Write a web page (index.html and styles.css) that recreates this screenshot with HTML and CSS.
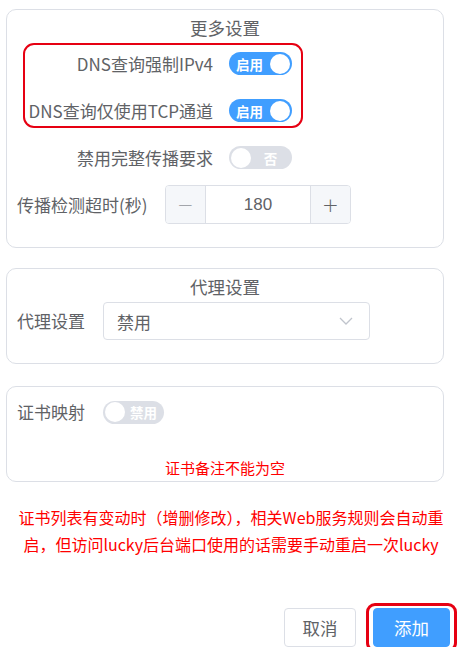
FILE: index.html
```html
<!DOCTYPE html>
<html lang="zh-CN">
<head>
<meta charset="utf-8">
<title>更多设置</title>
<link rel="stylesheet" href="styles.css">
</head>
<body>
<div class="page">
  <section class="card card-more">
    <div class="card-title">更多设置</div>
    <div class="row">
      <span class="lbl lbl-right">DNS查询强制IPv4</span>
      <span class="switch on"><span class="sw-text">启用</span><span class="knob"></span></span>
    </div>
    <div class="row">
      <span class="lbl lbl-right">DNS查询仅使用TCP通道</span>
      <span class="switch on"><span class="sw-text">启用</span><span class="knob"></span></span>
    </div>
    <div class="row">
      <span class="lbl lbl-right">禁用完整传播要求</span>
      <span class="switch off"><span class="knob"></span><span class="sw-text">否</span></span>
    </div>
    <div class="row row-indent">
      <span class="lbl lbl-num">传播检测超时(秒)</span>
      <div class="num">
        <span class="num-btn num-dec">−</span>
        <span class="num-val">180</span>
        <span class="num-btn num-inc">+</span>
      </div>
    </div>
    <div class="annot annot-dns"></div>
  </section>

  <section class="card card-proxy">
    <div class="card-title">代理设置</div>
    <div class="row row-short row-indent">
      <span class="lbl lbl-short">代理设置</span>
      <div class="select">
        <span class="select-val">禁用</span>
        <svg class="chev" width="14" height="8" viewBox="0 0 14 8"><polyline points="1,1 7,7 13,1" fill="none" stroke="#c0c4cc" stroke-width="1.3"/></svg>
      </div>
    </div>
  </section>

  <section class="card card-cert">
    <div class="row row-cert row-indent">
      <span class="lbl lbl-short">证书映射</span>
      <span class="switch off switch-cert"><span class="knob"></span><span class="sw-text">禁用</span></span>
    </div>
    <div class="err">证书备注不能为空</div>
  </section>

  <p class="warn">证书列表有变动时（增删修改），相关Web服务规则会自动重<br>启，但访问lucky后台端口使用的话需要手动重启一次lucky</p>

  <div class="footer">
    <button class="btn btn-cancel">取消</button>
    <span class="btn-wrap"><button class="btn btn-primary">添加</button></span>
  </div>
</div>
</body>
</html>
```

FILE: styles.css
```css
* { box-sizing: border-box; }
html, body {
  margin: 0;
  padding: 0;
  background: #ffffff;
}
body {
  font-family: "Noto Sans CJK SC", "Noto Sans", sans-serif;
  color: #606266;
}
.page {
  width: 475px;
  padding: 9px 0 0 6px;
}
.card {
  position: relative;
  width: 438px;
  border: 1px solid #dcdfe6;
  border-radius: 10px;
  background: #fff;
}
.card-more { padding-bottom: 19px; }
.card-proxy { margin-top: 20px; padding-bottom: 20px; }
.card-cert { margin-top: 22px; padding: 5px 0 3px; }

.card-title {
  height: 30px;
  padding-top: 6px;
  line-height: 24px;
  font-size: 17.5px;
  text-align: center;
  color: #606266;
}
.row {
  display: flex;
  align-items: center;
  height: 47px;
}
.row-short { height: 44px; }
.row-cert { height: 40px; }
.row-indent { padding-left: 10px; }

.lbl {
  font-size: 17px;
  line-height: 24px;
  color: #606266;
  white-space: nowrap;
}
.lbl-right {
  width: 206px;
  text-align: right;
  margin-right: 16px;
}
.lbl-num { width: 148px; }
.lbl-short { width: 86px; }

.switch {
  display: inline-flex;
  align-items: center;
  width: 63px;
  height: 23px;
  border-radius: 12px;
  padding: 0 2px;
  color: #fff;
  font-size: 13.5px;
}
.switch.on {
  background: #409eff;
  justify-content: space-between;
  padding-left: 7px;
}
.switch.off {
  background: #dcdfe6;
  padding-left: 2px;
}
.switch-cert { width: 61px; }
.knob {
  width: 20px;
  height: 20px;
  border-radius: 50%;
  background: #fff;
  flex: none;
}
.sw-text {
  line-height: 20px;
  font-weight: 700;
}
.switch.off .sw-text {
  flex: 1;
  text-align: center;
}

.num {
  display: flex;
  width: 186px;
  height: 39px;
  border: 1px solid #dcdfe6;
  border-radius: 4px;
  overflow: hidden;
}
.num-btn {
  width: 40px;
  flex: none;
  background: #f5f7fa;
  display: flex;
  align-items: center;
  justify-content: center;
  font-size: 20px;
  color: #606266;
  font-family: "DejaVu Sans", sans-serif;
  font-weight: 300;
}
.num-dec { border-right: 1px solid #dcdfe6; color: #909399; }
.num-inc { border-left: 1px solid #dcdfe6; }
.num-val {
  flex: 1;
  display: flex;
  align-items: center;
  justify-content: center;
  font-family: "Liberation Sans", Arial, sans-serif;
  font-size: 17px;
  color: #606266;
}

.select {
  display: flex;
  align-items: center;
  justify-content: space-between;
  width: 267px;
  height: 38px;
  border: 1px solid #dcdfe6;
  border-radius: 4px;
  padding: 0 16px 0 13px;
}
.select-val {
  font-size: 17px;
  color: #606266;
}

.err {
  margin-top: 26px;
  line-height: 20px;
  font-size: 15px;
  color: #f00;
  text-align: center;
}

.warn {
  margin: 22px 0 0 -3px;
  width: 456px;
  font-size: 16px;
  line-height: 27px;
  color: #f00;
  text-align: center;
}

.footer {
  display: flex;
  justify-content: flex-end;
  gap: 17px;
  width: 444px;
  margin-top: 50px;
}
.btn {
  height: 39px;
  border-radius: 4px;
  font-family: "Noto Sans CJK SC", sans-serif;
  font-size: 17.5px;
  padding: 0;
  cursor: pointer;
}
.btn-cancel {
  width: 72px;
  background: #fff;
  border: 1px solid #dcdfe6;
  color: #606266;
}
.btn-primary {
  width: 77px;
  background: #409eff;
  border: 1px solid #409eff;
  color: #fff;
}
.btn-wrap {
  position: relative;
  display: inline-block;
  height: 39px;
}
.btn-wrap::after {
  content: "";
  position: absolute;
  top: -5px;
  bottom: -5px;
  left: -7px;
  right: -7px;
  border: 3px solid #e60012;
  border-radius: 9px;
  pointer-events: none;
}

.annot {
  position: absolute;
  border: 2.5px solid #e60012;
  border-radius: 11px;
  pointer-events: none;
}
.annot-dns {
  left: 16px;
  top: 33px;
  width: 280px;
  height: 85px;
}
```
